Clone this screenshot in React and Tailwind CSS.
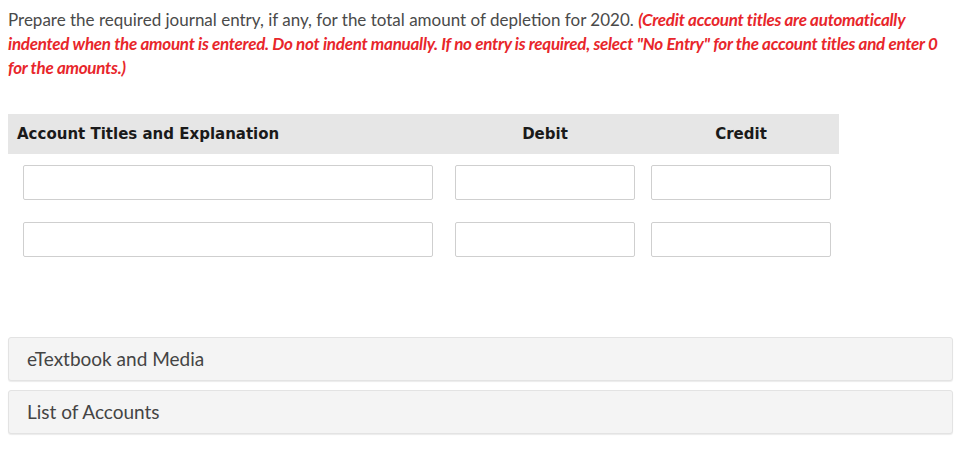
import React from 'react';

const lato = { fontFamily: 'Lato, "Open Sans", sans-serif' };

const Field = ({ className }) => (
  <div className={`h-[35px] border border-[#cfcfcf] bg-white rounded-[2px] ${className}`} />
);

const EntryRow = () => (
  <div className="flex py-[11px]">
    <div className="w-[439px] pl-[15px]">
      <Field className="w-[410px]" />
    </div>
    <div className="w-[196px] px-2">
      <Field className="w-[180px]" />
    </div>
    <div className="w-[196px] px-2">
      <Field className="w-[180px]" />
    </div>
  </div>
);

const Panel = ({ label }) => (
  <div className="h-[44px] flex items-center px-[18px] bg-[#f4f4f4] border border-[#e3e3e3] rounded-[3px] shadow-[0_1px_1px_rgba(0,0,0,0.08)] text-[19px] text-[#444]">
    {label}
  </div>
);

export default function App() {
  return (
    <div className="w-[970px] h-[458px] bg-white px-2 pt-[8px]" style={lato}>
      <p className="w-[945px] text-[17px] leading-[24px] text-[#4a4a4a]">
        Prepare the required journal entry, if any, for the total amount of depletion for 2020.{' '}
        <span className="italic font-bold tracking-[-0.27px] text-[#e8262b]">
          (Credit account titles are automatically indented when the amount is entered. Do not indent manually. If no entry is required, select "No Entry" for the account titles and enter 0 for the amounts.)
        </span>
      </p>

      <div className="mt-[34px] w-[831px]">
        <div
          className="flex h-[40px] items-center bg-[#e6e6e6] text-[15px] font-bold text-[#1a1a1a]"
          style={{ fontFamily: 'Verdana, "DejaVu Sans", sans-serif' }}
        >
          <div className="w-[439px] pl-[9px]">Account Titles and Explanation</div>
          <div className="w-[196px] text-center">Debit</div>
          <div className="w-[196px] text-center">Credit</div>
        </div>
        <EntryRow />
        <EntryRow />
      </div>

      <div className="mt-[69px] w-[945px] flex flex-col gap-[9px]">
        <Panel label="eTextbook and Media" />
        <Panel label="List of Accounts" />
      </div>
    </div>
  );
}
